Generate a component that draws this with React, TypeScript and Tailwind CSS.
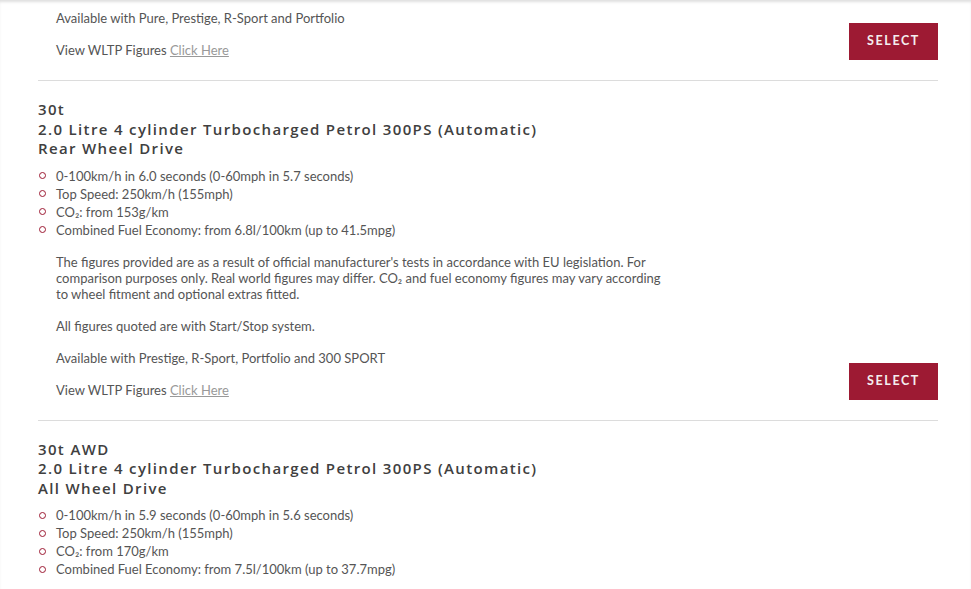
import React from 'react'

const body = "font-['Lato','Liberation_Sans',sans-serif]"

function SelectButton() {
  return (
    <button className={`${body} shrink-0 w-[89px] h-[37px] bg-[#9d1a33] text-[#f4eeee] text-[12.5px] font-bold tracking-[1.6px] uppercase`}>
      Select
    </button>
  )
}

function Bullets({ items }: { items: string[] }) {
  return (
    <ul className="mt-[8px] pl-[1px]">
      {items.map((item, i) => (
        <li key={i} className="flex items-center gap-[10px] leading-[18px] text-[13px] text-[#555]">
          <span className="w-[7px] h-[7px] rounded-full border-[1.5px] border-[#9d1a33] shrink-0" />
          <span>{item}</span>
        </li>
      ))}
    </ul>
  )
}

function Heading({ lines }: { lines: string[] }) {
  return (
    <h3 className="font-['Open_Sans','Liberation_Sans',sans-serif] text-[15px] font-semibold leading-[19.5px] tracking-[1.35px] text-[#404040]">
      {lines.map((l, i) => (
        <div key={i}>{l}</div>
      ))}
    </h3>
  )
}

function Para({ children }: { children: React.ReactNode }) {
  return <p className="mt-[16px] ml-[18px] text-[13px] leading-[16px] text-[#555]">{children}</p>
}

function Wltp() {
  return (
    <Para>
      View WLTP Figures{' '}
      <a href="#" className="text-[#999] underline">
        Click Here
      </a>
    </Para>
  )
}

export default function App() {
  return (
    <div className={`${body} min-h-screen bg-white shadow-[inset_0_3px_3px_-1px_rgba(0,0,0,0.13)] pl-[38px] pr-[33px]`}>
      <section className="flex items-end justify-between border-b border-[#dcdcdc] pb-[20px]">
        <div className="pb-[2px] pt-[10px]">
          <p className="ml-[18px] text-[13px] leading-[16px] text-[#555]">Available with Pure, Prestige, R-Sport and Portfolio</p>
          <Wltp />
        </div>
        <SelectButton />
      </section>

      <section className="flex items-end justify-between border-b border-[#dcdcdc] pt-[19px] pb-[20px]">
        <div className="pb-[2px]">
          <Heading lines={['30t', '2.0 Litre 4 cylinder Turbocharged Petrol 300PS (Automatic)', 'Rear Wheel Drive']} />
          <Bullets
            items={[
              '0-100km/h in 6.0 seconds (0-60mph in 5.7 seconds)',
              'Top Speed: 250km/h (155mph)',
              'CO₂: from 153g/km',
              'Combined Fuel Economy: from 6.8l/100km (up to 41.5mpg)',
            ]}
          />
          <p className="mt-[15px] ml-[18px] w-[612px] text-[13px] leading-[16px] text-[#555]">
            The figures provided are as a result of official manufacturer's tests in accordance with EU legislation. For
            comparison purposes only. Real world figures may differ. CO₂ and fuel economy figures may vary according
            to wheel fitment and optional extras fitted.
          </p>
          <Para>All figures quoted are with Start/Stop system.</Para>
          <Para>Available with Prestige, R-Sport, Portfolio and 300 SPORT</Para>
          <Wltp />
        </div>
        <SelectButton />
      </section>

      <section className="pt-[19px] pb-[20px]">
        <Heading lines={['30t AWD', '2.0 Litre 4 cylinder Turbocharged Petrol 300PS (Automatic)', 'All Wheel Drive']} />
        <Bullets
          items={[
            '0-100km/h in 5.9 seconds (0-60mph in 5.6 seconds)',
            'Top Speed: 250km/h (155mph)',
            'CO₂: from 170g/km',
            'Combined Fuel Economy: from 7.5l/100km (up to 37.7mpg)',
          ]}
        />
      </section>
    </div>
  )
}
